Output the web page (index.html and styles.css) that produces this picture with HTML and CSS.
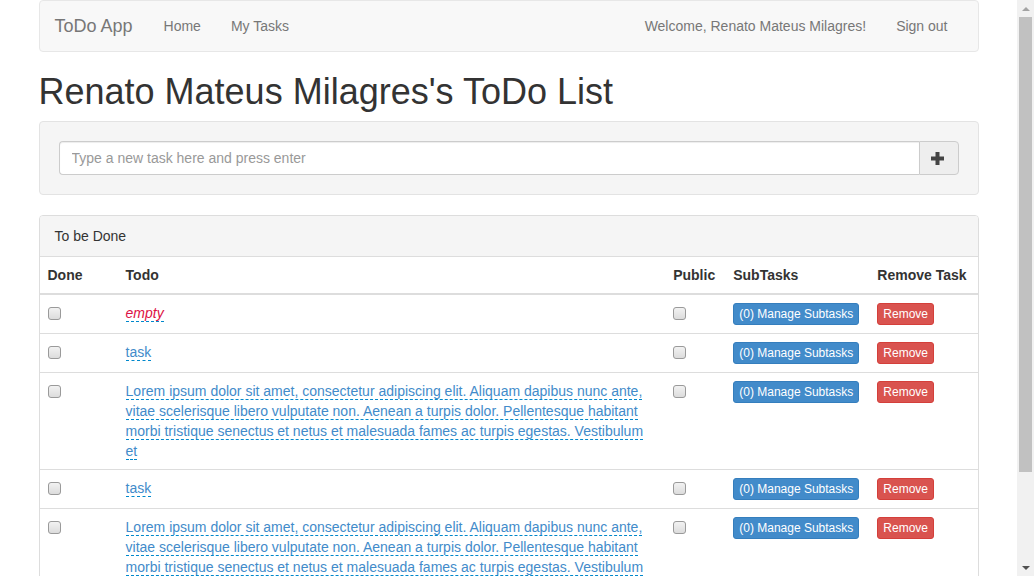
FILE: index.html
```html
<!DOCTYPE html>
<html lang="en">
<head>
<meta charset="utf-8">
<title>ToDo App</title>
<link rel="stylesheet" href="styles.css">
</head>
<body>
<div class="container">
  <nav class="navbar">
    <div class="nav-left">
      <a class="brand" href="#">ToDo App</a>
      <a class="nav-link" href="#">Home</a>
      <a class="nav-link" href="#">My Tasks</a>
    </div>
    <div class="nav-right">
      <a class="nav-link" href="#">Welcome, Renato Mateus Milagres!</a>
      <a class="nav-link" href="#">Sign out</a>
    </div>
  </nav>

  <h1 class="title">Renato Mateus Milagres's ToDo List</h1>

  <div class="well">
    <div class="input-group">
      <input class="task-input" type="text" placeholder="Type a new task here and press enter">
      <span class="addon">
        <svg width="13" height="13" viewBox="0 0 13 13" aria-hidden="true"><rect x="0" y="4.5" width="13" height="4" fill="#444"/><rect x="4.5" y="0" width="4" height="13" fill="#444"/></svg>
      </span>
    </div>
  </div>

  <div class="panel">
    <div class="panel-heading">To be Done</div>
    <table class="table">
      <colgroup>
        <col class="c-done"><col class="c-todo"><col class="c-public"><col class="c-sub"><col class="c-remove">
      </colgroup>
      <thead>
        <tr><th>Done</th><th>Todo</th><th>Public</th><th>SubTasks</th><th>Remove Task</th></tr>
      </thead>
      <tbody>
        <tr>
          <td><input class="check" type="checkbox"></td>
          <td><a class="editable empty" href="#">empty</a></td>
          <td><input class="check" type="checkbox"></td>
          <td><button class="btn btn-primary">(0) Manage Subtasks</button></td>
          <td><button class="btn btn-danger">Remove</button></td>
        </tr>
        <tr>
          <td><input class="check" type="checkbox"></td>
          <td><a class="editable" href="#">task</a></td>
          <td><input class="check" type="checkbox"></td>
          <td><button class="btn btn-primary">(0) Manage Subtasks</button></td>
          <td><button class="btn btn-danger">Remove</button></td>
        </tr>
        <tr>
          <td><input class="check" type="checkbox"></td>
          <td><a class="editable" href="#">Lorem ipsum dolor sit amet, consectetur adipiscing elit. Aliquam dapibus nunc ante, vitae scelerisque libero vulputate non. Aenean a turpis dolor. Pellentesque habitant morbi tristique senectus et netus et malesuada fames ac turpis egestas. Vestibulum et</a></td>
          <td><input class="check" type="checkbox"></td>
          <td><button class="btn btn-primary">(0) Manage Subtasks</button></td>
          <td><button class="btn btn-danger">Remove</button></td>
        </tr>
        <tr>
          <td><input class="check" type="checkbox"></td>
          <td><a class="editable" href="#">task</a></td>
          <td><input class="check" type="checkbox"></td>
          <td><button class="btn btn-primary">(0) Manage Subtasks</button></td>
          <td><button class="btn btn-danger">Remove</button></td>
        </tr>
        <tr>
          <td><input class="check" type="checkbox"></td>
          <td><a class="editable" href="#">Lorem ipsum dolor sit amet, consectetur adipiscing elit. Aliquam dapibus nunc ante, vitae scelerisque libero vulputate non. Aenean a turpis dolor. Pellentesque habitant morbi tristique senectus et netus et malesuada fames ac turpis egestas. Vestibulum et</a></td>
          <td><input class="check" type="checkbox"></td>
          <td><button class="btn btn-primary">(0) Manage Subtasks</button></td>
          <td><button class="btn btn-danger">Remove</button></td>
        </tr>
        <tr>
          <td><input class="check" type="checkbox"></td>
          <td><a class="editable" href="#">task</a></td>
          <td><input class="check" type="checkbox"></td>
          <td><button class="btn btn-primary">(0) Manage Subtasks</button></td>
          <td><button class="btn btn-danger">Remove</button></td>
        </tr>
      </tbody>
    </table>
  </div>
</div>

<div class="scrollbar" aria-hidden="true">
  <div class="sb-arrow sb-up"></div>
  <div class="sb-track"><div class="sb-thumb"></div></div>
  <div class="sb-arrow sb-down"></div>
</div>
</body>
</html>
```

FILE: styles.css
```css
html {
  scrollbar-width: none;
}
html::-webkit-scrollbar {
  display: none;
}
* {
  box-sizing: border-box;
}
body {
  margin: 0;
  padding-right: 17px;
  font-family: "Liberation Sans", Arial, Helvetica, sans-serif;
  font-size: 14px;
  line-height: 20px;
  color: #333;
  background: #fff;
}
a {
  text-decoration: none;
}
.container {
  width: 970px;
  margin: 0 auto;
  padding: 0 15px;
}

/* navbar */
.navbar {
  display: flex;
  justify-content: space-between;
  height: 52px;
  background: #f8f8f8;
  border: 1px solid #e7e7e7;
  border-radius: 4px;
  margin-bottom: 20px;
}
.nav-left,
.nav-right {
  display: flex;
}
.nav-left {
  padding-left: 0;
}
.nav-right {
  padding-right: 15px;
}
.brand {
  padding: 15px 16px 15px 15px;
  font-size: 18px;
  line-height: 20px;
  color: #777;
}
.nav-link {
  padding: 15px;
  color: #777;
  line-height: 20px;
}

/* title */
.title {
  margin: 20px 0 10px;
  font-size: 36px;
  font-weight: normal;
  line-height: 39px;
  color: #333;
}

/* well */
.well {
  padding: 19px;
  background: #f5f5f5;
  border: 1px solid #e3e3e3;
  border-radius: 4px;
  margin-bottom: 20px;
}
.input-group {
  display: flex;
  height: 34px;
}
.task-input {
  flex: 1;
  height: 34px;
  padding: 6px 12px;
  font-family: inherit;
  font-size: 14px;
  color: #555;
  border: 1px solid #ccc;
  border-right: 0;
  border-radius: 4px 0 0 4px;
  background: #fff;
  box-shadow: inset 0 1px 1px rgba(0,0,0,.075);
  outline: none;
}
.task-input::placeholder {
  color: #999;
}
.addon {
  width: 40px;
  display: flex;
  align-items: center;
  justify-content: center;
  background: #eee;
  border: 1px solid #ccc;
  border-radius: 0 4px 4px 0;
  padding-right: 3px;
}

/* panel */
.panel {
  border: 1px solid #ddd;
  border-radius: 4px;
  margin-bottom: 20px;
}
.panel-heading {
  padding: 10px 15px;
  background: #f5f5f5;
  border-bottom: 1px solid #ddd;
  border-radius: 3px 3px 0 0;
  color: #333;
}
.table {
  width: 100%;
  border-collapse: collapse;
  table-layout: fixed;
}
.c-done { width: 78px; }
.c-todo { width: 547px; }
.c-public { width: 60px; }
.c-sub { width: 144px; }
.c-remove { width: 108px; }
.table th {
  padding: 8px;
  text-align: left;
  font-weight: bold;
  border-bottom: 2px solid #ddd;
  vertical-align: bottom;
}
.table td {
  padding: 8px;
  border-top: 1px solid #ddd;
  vertical-align: top;
}
.check {
  appearance: none;
  -webkit-appearance: none;
  display: block;
  width: 13px;
  height: 13px;
  margin: 4px 0 0;
  border: 1px solid #9a9a9a;
  border-radius: 3px;
  background: linear-gradient(#f2f2f2, #dcdcdc);
}
.editable {
  color: #428bca;
  border-bottom: 1px dashed #08c;
}
.editable.empty {
  color: #d14;
  font-style: italic;
}
.btn {
  display: block;
  height: 22px;
  padding: 1px 5px;
  font-family: inherit;
  font-size: 12px;
  line-height: 18px;
  color: #fff;
  border: 1px solid transparent;
  border-radius: 3px;
  white-space: nowrap;
}
.btn-primary {
  background: #428bca;
  border-color: #357ebd;
}
.btn-danger {
  background: #d9534f;
  border-color: #d43f3a;
}

/* fake window scrollbar */
.scrollbar {
  position: fixed;
  top: 0;
  right: 0;
  width: 17px;
  height: 100vh;
  background: #f1f1f1;
  display: flex;
  flex-direction: column;
}
.sb-arrow {
  height: 17px;
  display: flex;
  align-items: center;
  justify-content: center;
}
.sb-up::before {
  content: "";
  border-left: 4px solid transparent;
  border-right: 4px solid transparent;
  border-bottom: 4px solid #a3a3a3;
}
.sb-down::before {
  content: "";
  border-left: 4px solid transparent;
  border-right: 4px solid transparent;
  border-top: 4px solid #505050;
}
.sb-track {
  flex: 1;
  padding: 0 2px;
}
.sb-thumb {
  height: 455px;
  background: #c1c1c1;
}
```
